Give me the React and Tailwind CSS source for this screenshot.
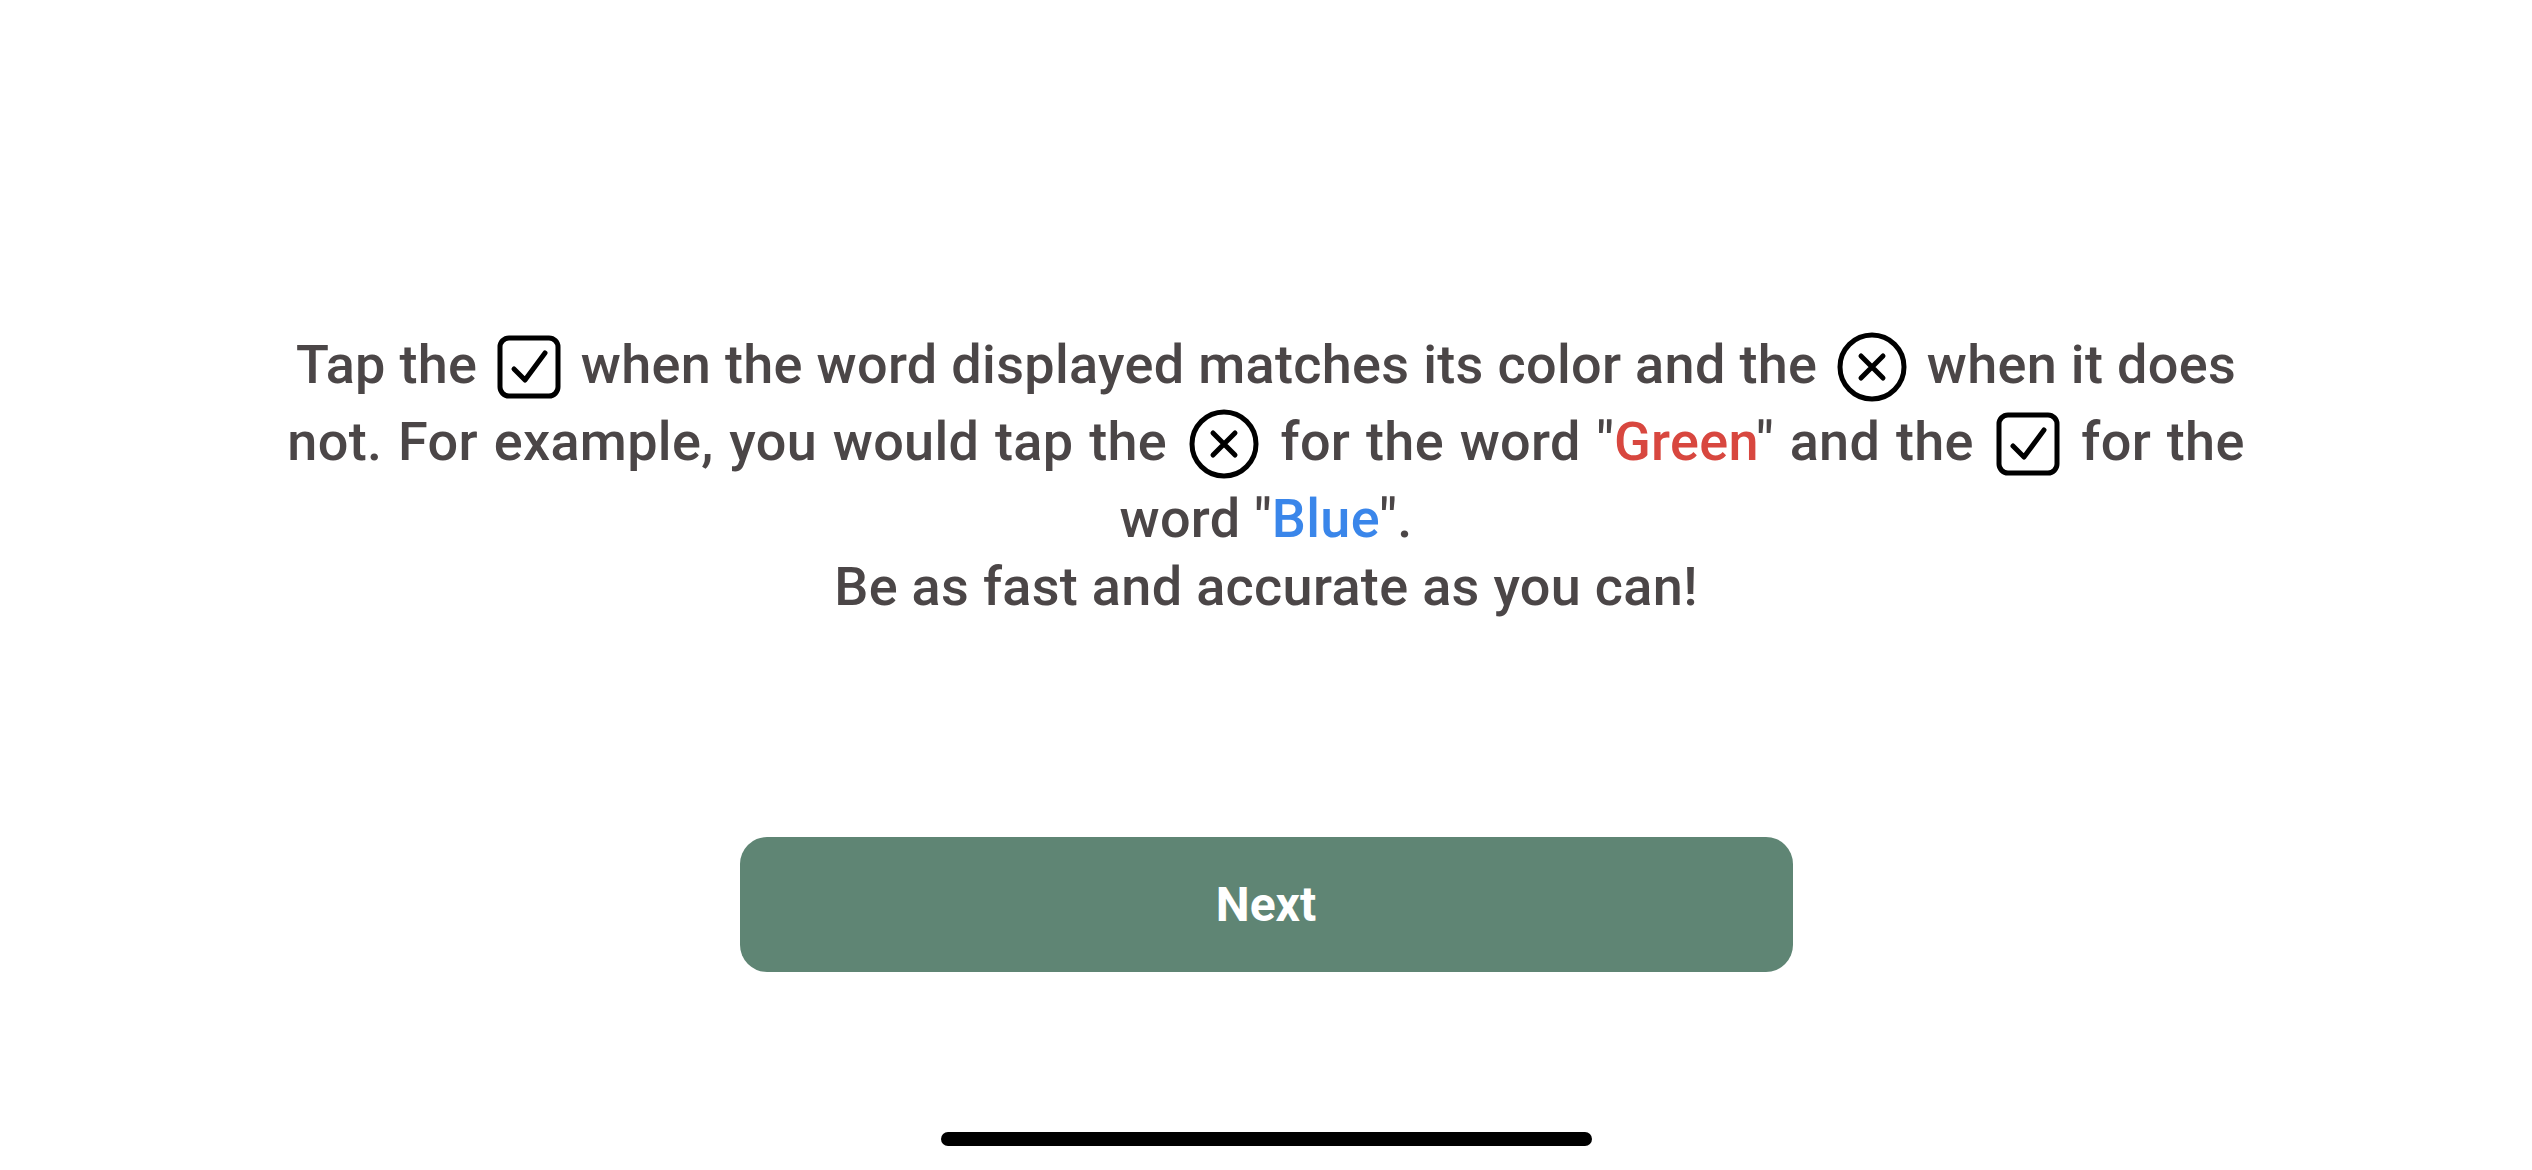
import React from 'react';

// checkbox glyph used inline in the instructions
const CheckBoxIcon = () => (
  <svg
    viewBox="0 0 64 64"
    className="inline-block w-[64px] h-[64px] mx-[6px] -my-3 align-[-4px]"
    fill="none"
    stroke="#000"
    strokeWidth="5"
    strokeLinecap="round"
    strokeLinejoin="round"
  >
    <rect x="3" y="3" width="58" height="58" rx="9" />
    <path d="M17 34 L28 45 L48 18" />
  </svg>
);

const CrossIcon = () => (
  <svg
    viewBox="0 0 70 70"
    className="inline-block w-[70px] h-[70px] mx-[6px] -my-3 align-[-7px]"
    fill="none"
    stroke="#000"
    strokeWidth="5"
    strokeLinecap="round"
  >
    <circle cx="35" cy="35" r="32" />
    <path d="M24 24 L46 46 M46 24 L24 46" />
  </svg>
);

const App = () => {
  return (
    <div
      className="w-full h-[1170px] bg-white flex flex-col items-center overflow-hidden"
      style={{ fontFamily: 'Roboto, "Noto Sans", sans-serif' }}
    >
      <div className="mt-[326px] text-center text-[54px] tracking-[0.32px] font-medium text-[#4b4647]">
        <p className="leading-[77px]">
          Tap the <CheckBoxIcon /> when the word displayed matches its color and the <CrossIcon /> when it does
          <br />
          <span className="[word-spacing:2px]">
            not. For example, you would tap the <CrossIcon /> for the word "<span className="text-[#d8473f]">Green</span>" and the <CheckBoxIcon /> for the
          </span>
          <br />
          word "<span className="text-[#3a86ea]">Blue</span>".
        </p>
        <p className="-mt-[5px] leading-[70px]">Be as fast and accurate as you can!</p>
      </div>

      <button className="mt-[215px] w-[1053px] h-[135px] rounded-[27px] bg-[#5f8574] text-white text-[48px] font-bold">
        Next
      </button>

      <div className="mt-[160px] w-[651px] h-[14px] rounded-full bg-black" />
    </div>
  );
};

export default App;
